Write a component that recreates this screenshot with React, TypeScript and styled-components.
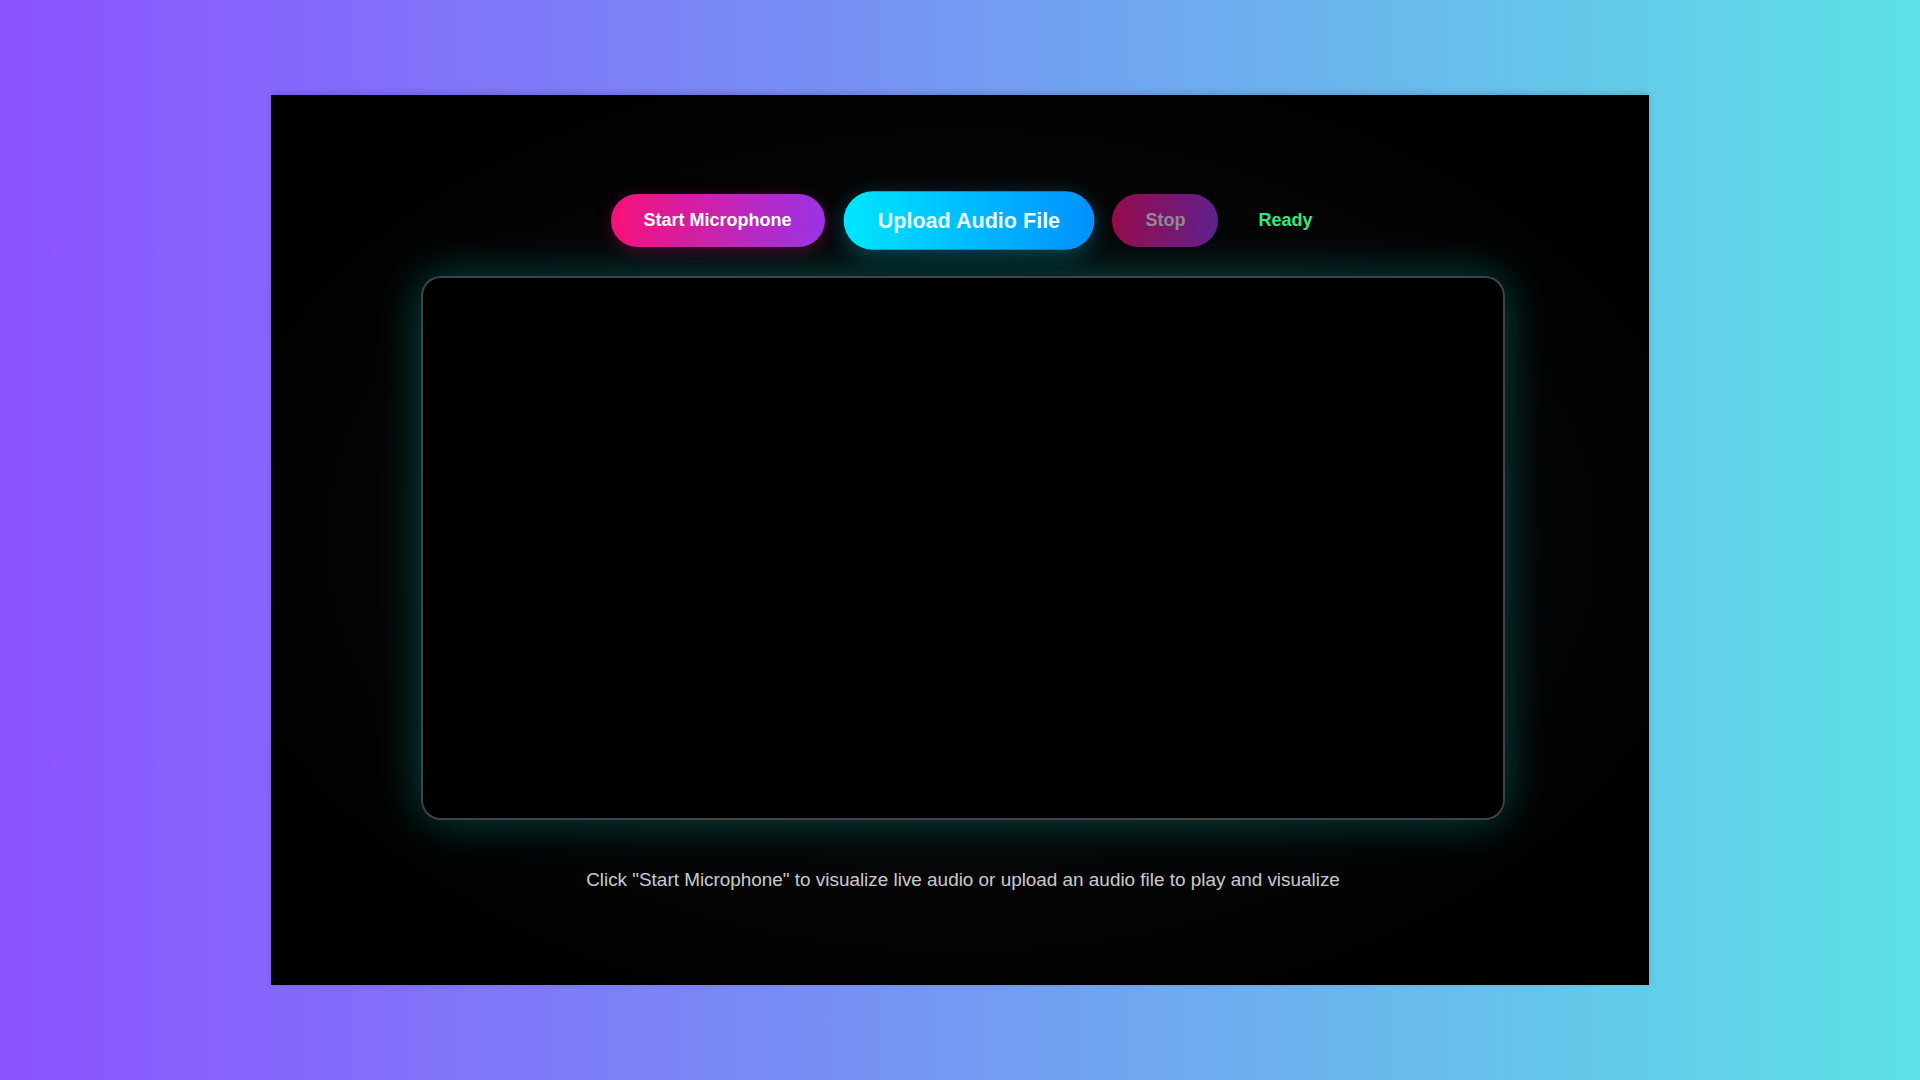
import styled, { createGlobalStyle, css } from 'styled-components';

// Styles globaux : fond en dégradé violet -> cyan
const GlobalStyle = createGlobalStyle`
  html, body {
    margin: 0;
    padding: 0;
    height: 100%;
  }
  body {
    background: linear-gradient(to right, #8c52ff, #5ce1e6);
    font-family: "Liberation Sans", Arial, sans-serif;
    overflow: hidden;
  }
`;

// Conteneur plein écran qui centre la scène
const Page = styled.div`
  width: 100vw;
  height: 100vh;
  display: flex;
  align-items: center;
  justify-content: center;
`;

// Scène noire du visualiseur
const Stage = styled.main`
  width: 1378px;
  height: 890px;
  box-sizing: border-box;
  padding: 5px 0 0 6px;
  background: radial-gradient(ellipse at center, #0a0a0c 0%, #050506 55%, #000 85%);
  box-shadow: 0 -2px 6px rgba(0, 0, 0, 0.15);
  display: flex;
  flex-direction: column;
  align-items: center;
  justify-content: center;
`;

// Barre de contrôles
const Controls = styled.div`
  display: flex;
  align-items: center;
  gap: 30px;
  padding-left: 7px;
  margin-bottom: 29px;
`;

type Variant = 'mic' | 'upload' | 'stop';

// Bouton en pilule avec dégradé
const PillButton = styled.button<{ $variant: Variant }>`
  border: none;
  border-radius: 999px;
  font-family: "Liberation Sans", Arial, sans-serif;
  font-weight: 700;
  font-size: 18px;
  line-height: 1.15;
  padding: 16px 33px;
  color: #fff;
  cursor: pointer;
  white-space: nowrap;

  ${({ $variant }) =>
    $variant === 'mic' &&
    css`
      background: linear-gradient(90deg, #f8107a, #9a34e6);
      box-shadow: 0 4px 16px rgba(255, 0, 128, 0.28);
    `}

  ${({ $variant }) =>
    $variant === 'upload' &&
    css`
      font-size: 19.6px;
      padding: 15px 31px;
      color: #ecffff;
      background: linear-gradient(90deg, #00e6ff, #0090ff);
      box-shadow: 0 5px 20px rgba(0, 220, 255, 0.3);
      transform: scale(1.1);
    `}

  ${({ $variant }) =>
    $variant === 'stop' &&
    css`
      background: linear-gradient(90deg, #f8107a, #9a34e6);
      opacity: 0.6;
      color: #f4dcef;
      cursor: not-allowed;
    `}
`;

// Indicateur d'état
const Status = styled.span`
  font-size: 18px;
  font-weight: 700;
  color: #33e87c;
  padding: 10px;
`;

// Zone de dessin du visualiseur
const VisualizerCanvas = styled.canvas`
  display: block;
  width: 1080px;
  height: 540px;
  background: #000;
  border: 2px solid rgba(255, 255, 255, 0.26);
  border-radius: 20px;
  box-shadow: 0 0 45px rgba(0, 255, 240, 0.28);
`;

// Texte d'aide
const Hint = styled.p`
  margin: 49px 0 0;
  font-size: 18.9px;
  color: rgba(255, 255, 255, 0.8);
  text-align: center;
`;

const App = () => {
  return (
    <>
      <GlobalStyle />
      <Page>
        <Stage>
          <Controls>
            <PillButton $variant="mic">Start Microphone</PillButton>
            <PillButton $variant="upload">Upload Audio File</PillButton>
            <PillButton $variant="stop" disabled>
              Stop
            </PillButton>
            <Status>Ready</Status>
          </Controls>
          <VisualizerCanvas width={1080} height={540} />
          <Hint>
            Click "Start Microphone" to visualize live audio or upload an audio file to play and visualize
          </Hint>
        </Stage>
      </Page>
    </>
  );
};

export default App;
